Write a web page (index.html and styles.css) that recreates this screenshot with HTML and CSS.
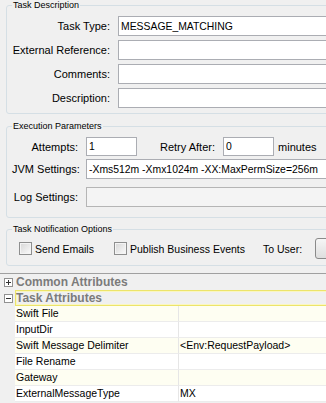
FILE: index.html
```html
<!DOCTYPE html>
<html>
<head>
<meta charset="utf-8">
<title>Task</title>
<link rel="stylesheet" href="styles.css">
</head>
<body>
<div class="page">
  <div class="groups">
    <fieldset class="group g-desc">
      <legend>Task Description</legend>
      <div class="form-grid">
        <label class="lbl">Task Type:</label><input class="field" type="text" value="MESSAGE_MATCHING">
        <label class="lbl">External Reference:</label><input class="field" type="text" value="">
        <label class="lbl">Comments:</label><input class="field" type="text" value="">
        <label class="lbl">Description:</label><input class="field" type="text" value="">
      </div>
    </fieldset>

    <fieldset class="group g-exec">
      <legend>Execution Parameters</legend>
      <div class="row r-attempts">
        <label class="lbl">Attempts:</label>
        <input class="field small" type="text" value="1">
        <label class="retry">Retry After:</label>
        <input class="field small retry-in" type="text" value="0">
        <span class="unit">minutes</span>
      </div>
      <div class="row r-jvm">
        <label class="lbl">JVM Settings:</label>
        <input class="field grow" type="text" value="-Xms512m -Xmx1024m -XX:MaxPermSize=256m">
      </div>
      <div class="row r-log">
        <label class="lbl">Log Settings:</label>
        <input class="field grow disabled" type="text" value="" disabled>
      </div>
    </fieldset>

    <fieldset class="group g-notify">
      <legend>Task Notification Options</legend>
      <div class="notify-row">
        <label class="chk"><input type="checkbox"><span>Send Emails</span></label>
        <label class="chk"><input type="checkbox"><span>Publish Business Events</span></label>
        <span class="to-user">To User:</span>
        <div class="combo"></div>
      </div>
    </fieldset>
  </div>

  <div class="props">
    <div class="cat">
      <span class="tog"><svg width="9" height="9" viewBox="0 0 9 9"><rect x="0.5" y="0.5" width="8" height="8" fill="#fff" stroke="#919191"/><path d="M2 4.5h5M4.5 2v5" stroke="#333" stroke-width="1"/></svg></span>
      <span class="cat-name">Common Attributes</span>
    </div>
    <div class="cat cat-sel">
      <span class="tog"><svg width="9" height="9" viewBox="0 0 9 9"><rect x="0.5" y="0.5" width="8" height="8" fill="#fff" stroke="#919191"/><path d="M2 4.5h5" stroke="#333" stroke-width="1"/></svg></span>
      <span class="cat-name">Task Attributes</span>
    </div>
    <div class="prow alt"><span class="gut"></span><span class="pname">Swift File</span><span class="pval"></span></div>
    <div class="prow"><span class="gut"></span><span class="pname">InputDir</span><span class="pval"></span></div>
    <div class="prow alt"><span class="gut"></span><span class="pname">Swift Message Delimiter</span><span class="pval">&lt;Env:RequestPayload&gt;</span></div>
    <div class="prow"><span class="gut"></span><span class="pname">File Rename</span><span class="pval"></span></div>
    <div class="prow alt"><span class="gut"></span><span class="pname">Gateway</span><span class="pval"></span></div>
    <div class="prow"><span class="gut"></span><span class="pname">ExternalMessageType</span><span class="pval">MX</span></div>
  </div>
</div>
</body>
</html>
```

FILE: styles.css
```css
* { box-sizing: border-box; }
html, body { margin: 0; padding: 0; }
body {
  width: 326px;
  height: 403px;
  overflow: hidden;
  background: #f0f0f0;
  font-family: "Liberation Sans", Arial, sans-serif;
  font-size: 11px;
  color: #000;
}
.page { width: 360px; }
.groups {
  padding-left: 6px;
  display: flex;
  flex-direction: column;
}
.group {
  margin: 0;
  min-width: 0;
  border: 1px solid #d5dfe5;
  border-radius: 3px;
  padding: 5px 0 5px 5px;
}
.group legend {
  font-size: 9px;
  line-height: 11px;
  padding: 0 1px;
  margin: 0;
  color: #000;
}
.g-exec { margin-top: 7px; padding-bottom: 10px; }
.g-notify { margin-top: 6px; padding-top: 3px; padding-bottom: 6px; }

.form-grid {
  display: grid;
  grid-template-columns: 98px 1fr;
  column-gap: 8px;
  row-gap: 4px;
  align-items: center;
}
.lbl { text-align: right; white-space: nowrap; }

.field {
  height: 20px;
  border: 1px solid #abadb3;
  background: #fff;
  font-family: inherit;
  font-size: 10.4px;
  color: #000;
  padding: 0 2px;
  margin: 0;
  border-radius: 0;
  outline: none;
}
.row {
  display: flex;
  align-items: center;
  gap: 8px;
}
.row .lbl { width: 66px; flex: none; }
.r-attempts { height: 19px; }
.field.small { width: 51px; height: 19px; flex: none; }
.retry { margin-left: 15px; white-space: nowrap; }
.retry-in { margin-left: 0; }
.unit { margin-left: -4px; }
.r-jvm { margin-top: 3px; }
.r-log { margin-top: 8px; }
.field.grow { flex: 1; }
.field.disabled { background: #f4f4f4; border-color: #b5b5b5; }

.notify-row {
  display: grid;
  grid-template-columns: 95px 149px max-content 1fr;
  align-items: center;
  height: 21px;
  padding-left: 7px;
  font-size: 10.5px;
}
.chk { display: flex; align-items: center; gap: 3px; white-space: nowrap; }
.chk input {
  -webkit-appearance: none;
  appearance: none;
  width: 13px;
  height: 13px;
  margin: 0;
  border: 1px solid #8e8f8f;
  background: linear-gradient(135deg, #d6d6d6, #fbfbfb);
  box-shadow: inset 0 0 0 1px #f4f4f4;
}
.to-user { white-space: nowrap; }
.combo {
  margin-left: 13px;
  height: 21px;
  border: 1px solid #8a8a8a;
  border-radius: 3px;
  background: linear-gradient(#f6f6f6, #dedede);
}

.props {
  margin-top: 7px;
  border-top: 1px solid #a0a0a0;
  font-size: 10.5px;
}
.cat {
  display: grid;
  grid-template-columns: 15px 1fr;
  height: 16px;
  align-items: center;
}
.tog { display: flex; padding-left: 4px; }
.tog svg { display: block; }
.cat-name {
  font-size: 12px;
  font-weight: bold;
  color: #7b7b7b;
  line-height: 14px;
  padding-left: 1px;
  height: 16px;
  display: flex;
  align-items: center;
}
.cat-sel .cat-name {
  padding-left: 0;
  border: 1px solid #ece46a;
  box-shadow: inset 0 0 0 1px #faf6c2;
}
.prow {
  display: grid;
  grid-template-columns: 15px 164px 1fr;
  height: 16px;
}
.pname, .pval {
  border-bottom: 1px solid #ececec;
  background: #fff;
  line-height: 15px;
  white-space: nowrap;
  padding-left: 1px;
}
.pname { border-right: 1px solid #e6e6e6; }
.prow.alt .pname, .prow.alt .pval { background: #fefef2; }
```
